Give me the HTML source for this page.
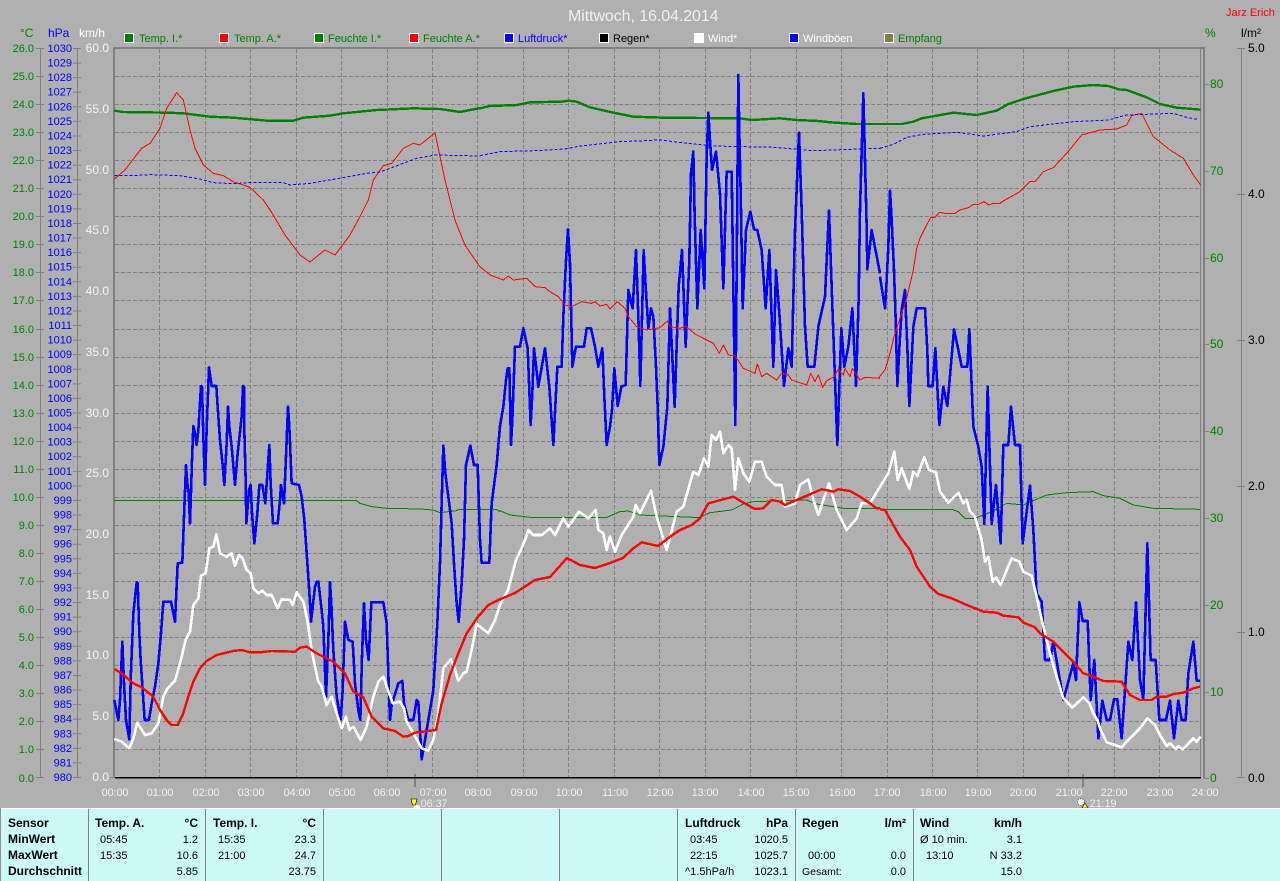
<!DOCTYPE html>
<html><head><meta charset="utf-8"><title>Mittwoch, 16.04.2014</title>
<style>
html,body{margin:0;padding:0;background:#b0b0b0;width:1280px;height:881px;overflow:hidden}
svg{display:block}
text{font-family:"Liberation Sans",Arial,sans-serif;font-size:11px}
.c{fill:#008000;text-anchor:end}
.h{fill:#0000ff;text-anchor:end}
.k{fill:#f4f4f4;text-anchor:end;font-size:12px}
.r{fill:#008000;font-size:12px}
.l{fill:#000;font-size:12px}
.t{fill:#f0f0f0;text-anchor:middle;font-size:11px;letter-spacing:-.15px}
.b{font-weight:bold;font-size:12px;fill:#000}
.n{fill:#000}
.e{text-anchor:end}
polyline{fill:none;stroke-linejoin:round;vector-effect:non-scaling-stroke;shape-rendering:crispEdges}
.bl{stroke:#0000ff;stroke-width:2.6}
.wh{stroke:#fff;stroke-width:2.6}
.rd{stroke:#ff0000;stroke-width:2.4}
.gr{stroke:#008000;stroke-width:2.4}
.rt{stroke:#ff0000;stroke-width:1}
.gt{stroke:#008000;stroke-width:1}
.dt{stroke:#0000ff;stroke-width:1;stroke-dasharray:3 2}
</style></head><body>
<svg width="1280" height="881" viewBox="0 0 1280 881" xmlns="http://www.w3.org/2000/svg">
<rect width="1280" height="881" fill="#b0b0b0"/>

<!-- grid -->
<path d="M115 76.5H1201M115 104.5H1201M115 132.5H1201M115 160.5H1201M115 188.5H1201M115 216.5H1201M115 244.5H1201M115 272.5H1201M115 300.5H1201M115 329.5H1201M115 357.5H1201M115 385.5H1201M115 413.5H1201M115 441.5H1201M115 469.5H1201M115 497.5H1201M115 525.5H1201M115 553.5H1201M115 581.5H1201M115 609.5H1201M115 637.5H1201M115 665.5H1201M115 693.5H1201M115 721.5H1201M115 749.5H1201" stroke="#808080" stroke-width="1" stroke-dasharray="4 2" fill="none" shape-rendering="crispEdges"/>
<path d="M159.5 49V777M205.5 49V777M250.5 49V777M296.5 49V777M341.5 49V777M387.5 49V777M432.5 49V777M477.5 49V777M523.5 49V777M568.5 49V777M614.5 49V777M659.5 49V777M705.5 49V777M750.5 49V777M796.5 49V777M841.5 49V777M887.5 49V777M932.5 49V777M977.5 49V777M1023.5 49V777M1068.5 49V777M1114.5 49V777M1159.5 49V777" stroke="#808080" stroke-width="1" stroke-dasharray="4 2" fill="none" shape-rendering="crispEdges"/>

<!-- frame -->
<g shape-rendering="crispEdges" fill="#808080">
<rect x="113" y="47" width="1092" height="2"/>
<rect x="113" y="47" width="2" height="731"/>
<rect x="1200" y="47" width="1" height="731"/>
<rect x="1203" y="47" width="2" height="731"/>
<rect x="40" y="48" width="1" height="729"/>
<rect x="77" y="48" width="1" height="729"/>
<rect x="1241" y="48" width="1" height="729"/>
<rect x="414" y="774" width="2" height="13"/>
<rect x="1082" y="774" width="2" height="13"/>
</g>
<!-- ticks -->
<path d="M36 48.5h8M36 76.5h8M36 104.5h8M36 132.5h8M36 160.5h8M36 188.5h8M36 216.5h8M36 244.5h8M36 272.5h8M36 300.5h8M36 329.5h8M36 357.5h8M36 385.5h8M36 413.5h8M36 441.5h8M36 469.5h8M36 497.5h8M36 525.5h8M36 553.5h8M36 581.5h8M36 609.5h8M36 637.5h8M36 665.5h8M36 693.5h8M36 721.5h8M36 749.5h8M36 777.5h8" stroke="#808080" fill="none" shape-rendering="crispEdges"/>
<line x1="77" y1="48" x2="77" y2="778" stroke="#808080" stroke-width="8" stroke-dasharray="1 13.58"/>
<path d="M110 777.5h4" stroke="#808080" fill="none" shape-rendering="crispEdges"/>
<path d="M1204 84.5h5M1204 171.5h5M1204 258.5h5M1204 344.5h5M1204 431.5h5M1204 518.5h5M1204 605.5h5M1204 692.5h5M1204 778.5h5M1237 48.5h8M1237 194.5h8M1237 340.5h8M1237 486.5h8M1237 632.5h8M1237 777.5h8" stroke="#808080" fill="none" shape-rendering="crispEdges"/>
<rect x="115" y="777" width="1086" height="1.6" fill="#000" shape-rendering="crispEdges"/>

<!-- thin green (Feuchte A.) -->
<g transform="translate(100 350) scale(.33333)"><polyline class="gt" points="43,452 770,452 780,460 815,470 860,475 960,477 1000,480 1020,488 1070,482 1075,478 1190,478 1200,485"/></g>
<g transform="translate(480 60) scale(.33333)"><polyline class="gt" points="60,1352 90,1365 150,1372 380,1372 420,1355 445,1353 480,1365 640,1372 660,1372 690,1358 755,1350 790,1332 820,1325 980,1320 1010,1332 1090,1345 1200,1345"/></g>
<g transform="translate(860 340) scale(.33333)"><polyline class="gt" points="60,508 275,508 295,515 315,535 345,535 395,515 440,490 490,495 525,480 560,465 620,458 700,455 730,467 780,475 820,495 880,505 1020,508"/></g>

<!-- thick green (Feuchte I.) -->
<g transform="scale(.33333)"><polyline class="gr" points="343,332 370,336 500,338 550,340 630,350 700,353 800,362 880,362 910,353 990,347 1030,340 1130,330 1240,325 1320,327 1380,336 1440,324"/></g>
<g transform="translate(480 60) scale(.33333)"><polyline class="gr" points="0,145 30,138 110,135 150,127 245,125 265,122 290,125 330,142 400,158 460,170 550,173 780,175 815,180 900,175 950,180 1015,183 1050,187 1130,192 1200,192"/></g>
<g transform="translate(860 0) scale(.33333)"><polyline class="gr" points="60,372 125,372 160,365 185,355 280,338 350,345 410,332 445,312 490,297 580,273 640,260 700,255 745,258 775,268 800,270 860,292 900,312 950,323 1022,329"/></g>

<!-- blue Windboeen -->
<g transform="translate(100 350) scale(.33333)"><polyline class="bl" points="43,1050 55,1110 60,1050 67,875 72,1000 78,1110 88,1168 92,990 100,790 110,697 113,700 118,850 122,930 130,1050 134,1110 147,1110 155,1060 165,1010 175,940 183,850 190,755 213,755 225,815 233,640 247,638 252,500 258,345 262,400 266,430 270,520 276,330 280,228 285,250 290,285 295,240 303,108 306,110 310,260 315,405 320,235 327,52 335,108 349,108 352,155 360,270 368,345 373,405 380,280 384,170 388,230 395,290 405,405 413,310 425,200 429,108 432,110 433,240 437,390 439,520 447,420 452,405 456,490 463,580 472,490 478,405 487,405 496,460 508,285 512,400 519,520 533,520 540,450 543,405 552,460 558,320 564,170 568,230 575,400 597,405 605,440 613,510 620,610 625,680 630,760 633,815 645,710 650,695 655,695 665,780 670,830 678,1040 685,870 690,697 694,760 700,900 710,1040 722,1110 728,1020 735,815 745,870 758,875 765,1000 775,1080 781,1110 786,920 792,760 798,870 806,930 814,757 850,757 860,820 866,1000 870,1110 875,1065 895,1000 907,993 912,1060 925,1110 940,1110 950,1050 955,1055 965,1228 975,1170 990,1080 1000,1020 1012,820 1020,640 1025,460 1030,287 1036,370 1045,440 1055,520 1062,640 1070,760 1076,815 1085,700 1092,570 1098,345 1111,287 1122,345 1133,345 1140,570 1145,638 1168,638 1175,460 1190,345 1200,228"/></g>
<g transform="translate(480 60) scale(.33333)"><polyline class="bl" points="60,1098 70,1040 78,960 83,925 88,925 93,1155 97,1080 105,860 120,860 130,805 143,865 146,940 152,1095 157,1000 162,865 175,980 195,865 208,980 220,1155 232,920 245,920 250,770 258,600 264,508 270,610 277,920 288,860 312,860 320,805 333,805 345,860 355,920 367,865 373,1010 380,1155 390,1100 396,1050 403,925 413,1038 424,980 437,975 445,690 458,745 468,570 475,770 481,978 491,570 497,680 505,805 513,745 520,770 528,920 533,1040 538,1215 550,1160 562,1040 570,745 584,1040 596,680 606,570 617,860 628,600 633,340 640,275 644,470 652,745 662,510 673,685 680,290 685,158 690,240 696,330 708,275 720,400 730,685 740,335 755,335 766,1095 775,45 778,220 782,395 788,745 798,510 811,455 822,508 832,510 845,570 857,745 868,570 880,920 888,630 898,760 912,978 925,865 935,920 945,510 957,218 965,450 975,800 983,920 1003,920 1015,800 1035,710 1047,452 1055,680 1072,1155 1084,805 1093,920 1105,860 1117,745 1128,978 1136,715 1140,450 1150,100 1160,500 1162,628 1175,510 1200,640"/></g>
<g transform="translate(870 170) scale(.33333)"><polyline class="bl" points="30,320 45,415 50,330 55,230 60,62 65,150 72,300 78,480 82,648 90,500 95,420 105,360 108,440 112,530 118,708 130,470 140,415 165,415 172,540 175,648 188,648 196,534 208,765 220,650 232,708 245,560 252,478 265,540 275,590 292,590 298,478 303,600"/></g>
<g transform="translate(860 340) scale(.33333)"><polyline class="bl" points="333,90 340,260 355,320 365,380 373,552 383,140 395,552 408,435 422,610 430,315 445,315 453,200 465,315 480,315 488,610 510,437 520,570 530,760 545,785 555,960 570,960 580,905 610,1080 640,970 648,1020 658,787 668,843 683,843 692,1080 703,960 715,1195 727,1082 740,1140 750,1140 762,1078 772,1078 785,1195 795,1050 805,905 817,960 828,787 840,1020 850,1078 862,610 872,960 887,960 898,1140 918,1140 930,1082 942,1195 955,1082 965,1140 977,1140 985,1000 1000,905 1010,1022 1020,1022"/></g>

<!-- thin red (Temp. I. curve) -->
<g transform="scale(.33333)"><polyline class="rt" points="343,537 375,510 400,477 425,445 450,430 480,385 500,325 530,278 550,300 570,390 585,445 610,495 640,520 670,527 700,545 750,562 790,600 816,639 855,705 900,765 930,786 975,750 1005,765 1050,705 1080,650 1105,600 1120,540 1150,497 1175,490 1210,445 1240,430 1260,435 1305,399 1335,540 1365,660 1395,735 1440,801"/></g>
<g transform="translate(480 60) scale(.33333)"><polyline class="rt" points="0,620 30,645 70,660 85,648 100,660 140,655 165,680 195,683 210,695 235,710 255,735 275,740 305,725 335,730 345,725 360,738 380,733 390,747 412,725 435,745 445,770 470,800 500,810 540,803 562,783 570,800 600,805 618,798 645,822 700,850 718,880 730,855 745,885 765,888 790,925 825,940 832,912 845,950 860,940 890,960 905,940 925,945 935,960 980,975 992,940 1005,965 1015,945 1028,982 1040,962 1062,950 1075,928 1090,945 1095,925 1110,950 1117,925 1140,960 1155,952 1200,955"/></g>
<g transform="translate(860 340) scale(.33333)"><polyline class="rt" points="55,115 75,90 90,40 100,0"/></g>
<g transform="translate(870 170) scale(.33333)"><polyline class="rt" points="69,510 85,460 110,385 130,300 140,235 150,205 170,165 182,143 195,142 208,127 225,130 255,130 270,120 295,113 310,103 325,103 342,95 357,105 370,100 390,100 405,90"/></g>
<g transform="translate(860 0) scale(.33333)"><polyline class="rt" points="435,600 480,575 510,545 525,545 550,515 580,503 620,460 665,405 720,390 770,387 800,375 815,347 845,340 880,410 930,450 970,475 1000,525 1022,555"/></g>

<!-- dotted blue (Luftdruck) -->
<g transform="scale(.33333)"><polyline class="dt" points="343,527 400,527 450,524 540,527 600,537 640,548 700,551 750,548 850,548 870,555 930,550 1000,538 1100,520 1140,516 1250,475 1305,465 1440,468"/></g>
<g transform="translate(480 60) scale(.33333)"><polyline class="dt" points="0,287 60,275 165,272 255,267 300,258 420,245 540,240 640,252 700,258 885,262 950,268 1000,272 1200,265"/></g>
<g transform="translate(860 0) scale(.33333)"><polyline class="dt" points="60,445 100,433 140,412 190,403 290,397 370,408 470,395 510,380 640,365 745,360 800,345 940,340 980,352 1012,358"/></g>

<!-- white wind -->
<g transform="translate(100 350) scale(.33333)"><polyline class="wh" points="43,1167 65,1175 88,1195 100,1165 112,1118 135,1155 155,1150 175,1120 190,1040 203,1015 225,992 240,940 257,870 270,845 280,765 295,745 303,677 317,670 328,595 340,590 349,553 360,610 380,620 395,610 405,647 417,615 428,625 440,660 452,670 460,715 475,730 487,722 500,735 515,735 533,775 545,748 570,750 578,765 590,727 610,755 622,810 635,900 645,950 655,995 665,1010 680,1065 695,1040 710,1090 725,1135 738,1100 748,1140 760,1130 782,1170 800,1130 810,1085 820,1040 835,995 850,980 862,1015 878,1060 900,1055 912,1075 920,1115 940,1150 965,1195 985,1202 1000,1170 1015,1090 1030,955 1052,928 1062,950 1075,993 1090,970 1100,965 1115,900 1130,822 1165,850 1185,810 1200,765 1224,720 1248,630"/></g>
<g transform="translate(480 60) scale(.33333)"><polyline class="wh" points="108,1500 120,1475 135,1440 145,1410 160,1425 185,1425 210,1405 225,1425 250,1375 265,1400 297,1355 325,1375 347,1350 355,1410 370,1420 380,1470 390,1430 405,1475 425,1425 460,1370 467,1335 480,1360 513,1292 530,1370 560,1470 590,1355 610,1340 640,1235 655,1245 672,1195 685,1220 695,1125 708,1140 720,1115 730,1180 745,1155 755,1165 765,1290 775,1195 790,1240 808,1265 825,1205 845,1205 860,1250 885,1275 905,1275 915,1340 945,1330 960,1275 985,1258 1000,1320 1015,1365 1047,1270 1070,1350 1100,1410 1130,1375 1145,1330 1170,1330 1200,1280"/></g>
<g transform="translate(860 340) scale(.33333)"><polyline class="wh" points="60,440 85,400 103,335 113,420 125,385 148,447 160,395 172,408 193,352 207,390 228,397 240,455 265,488 295,458 310,490 320,480 330,515 345,530 365,600 375,665 385,650 398,725 408,712 422,735 440,690 455,655 478,665 490,695 515,707 530,770 550,860 575,960 610,1075 637,1103 670,1072 688,1090 700,1120 712,1140 722,1170 740,1207 765,1215 785,1222 800,1205 840,1165 862,1135 885,1155 900,1185 920,1218 930,1210 948,1228 955,1218 968,1228 1000,1195 1010,1205 1022,1190"/></g>

<!-- thick red (Temp. A.) -->
<g transform="translate(100 350) scale(.33333)"><polyline class="rd" points="43,957 65,970 100,1000 125,1012 160,1040 180,1080 200,1110 215,1125 233,1125 248,1095 265,1040 280,995 300,955 320,933 350,915 400,903 425,900 450,907 480,907 515,903 585,905 600,893 620,890 650,910 680,925 700,935 735,970 760,1025 790,1042 815,1100 850,1135 885,1143 910,1160 925,1158 945,1148 1008,1140 1025,1060 1050,975 1075,910 1100,850 1130,805 1165,765 1195,750 1245,729 1305,690 1350,681 1401,624 1440,645 1485,654 1530,639 1569,624"/></g>
<g transform="translate(480 60) scale(.33333)"><polyline class="rd" points="429,1494 460,1465 485,1447 535,1458 570,1430 600,1410 635,1395 660,1375 685,1330 760,1310 785,1325 825,1347 850,1345 875,1320 900,1325 915,1335 950,1320 1025,1288 1060,1295 1075,1288 1110,1293 1140,1310 1170,1330 1190,1345 1200,1345"/></g>
<g transform="translate(860 340) scale(.33333)"><polyline class="rd" points="60,508 75,510 100,555 120,590 150,630 170,680 210,740 235,762 280,777 320,795 370,815 410,818 430,827 475,832 490,848 525,862 540,880 580,905 635,960 670,1000 700,1010 730,1023 785,1025 810,1065 840,1080 875,1080 890,1070 920,1070 940,1062 970,1058 1000,1045 1020,1040"/></g>

<!-- header -->
<text x="568" y="21" style="font-size:16px;letter-spacing:-.08px" fill="#f0f0f0">Mittwoch, 16.04.2014</text>
<text x="1226" y="16" fill="#ff0000">Jarz Erich</text>
<text x="20" y="37" style="font-size:12px" fill="#008000">°C</text>
<text x="48" y="37" style="font-size:12px" fill="#0000ff">hPa</text>
<text x="79" y="37" style="font-size:12px" fill="#fff">km/h</text>
<text x="1205" y="37" style="font-size:12px" fill="#008000">%</text>
<text x="1241" y="37" style="font-size:12px" fill="#000">l/m²</text>

<!-- legend -->
<g shape-rendering="crispEdges" stroke="#fff" stroke-width="1">
<rect x="124.5" y="33.5" width="9" height="9" fill="#008000"/>
<rect x="219.5" y="33.5" width="9" height="9" fill="#ff0000"/>
<rect x="314.5" y="33.5" width="9" height="9" fill="#008000"/>
<rect x="409.5" y="33.5" width="9" height="9" fill="#ff0000"/>
<rect x="504.5" y="33.5" width="9" height="9" fill="#0000ff"/>
<rect x="599.5" y="33.5" width="9" height="9" fill="#000"/>
<rect x="694.5" y="33.5" width="9" height="9" fill="#fff"/>
<rect x="789.5" y="33.5" width="9" height="9" fill="#0000ff"/>
<rect x="884.5" y="33.5" width="9" height="9" fill="#808040"/>
</g>
<text x="139" y="42" fill="#008000">Temp. I.*</text>
<text x="234" y="42" fill="#008000">Temp. A.*</text>
<text x="328" y="42" fill="#008000">Feuchte I.*</text>
<text x="423" y="42" fill="#008000">Feuchte A.*</text>
<text x="518" y="42" fill="#0000ff">Luftdruck*</text>
<text x="613" y="42" fill="#000">Regen*</text>
<text x="708" y="42" fill="#fff">Wind*</text>
<text x="803" y="42" fill="#fff">Windböen</text>
<text x="898" y="42" fill="#008000">Empfang</text>

<!-- C axis -->
<g transform="translate(0 4)">
<text class="c" x="34" y="48">26.0</text><text class="c" x="34" y="76">25.0</text><text class="c" x="34" y="104">24.0</text><text class="c" x="34" y="132">23.0</text><text class="c" x="34" y="160">22.0</text><text class="c" x="34" y="188">21.0</text><text class="c" x="34" y="216">20.0</text><text class="c" x="34" y="244">19.0</text><text class="c" x="34" y="272">18.0</text><text class="c" x="34" y="300">17.0</text><text class="c" x="34" y="329">16.0</text><text class="c" x="34" y="357">15.0</text><text class="c" x="34" y="385">14.0</text><text class="c" x="34" y="413">13.0</text><text class="c" x="34" y="441">12.0</text><text class="c" x="34" y="469">11.0</text><text class="c" x="34" y="497">10.0</text><text class="c" x="34" y="525">9.0</text><text class="c" x="34" y="553">8.0</text><text class="c" x="34" y="581">7.0</text><text class="c" x="34" y="609">6.0</text><text class="c" x="34" y="637">5.0</text><text class="c" x="34" y="665">4.0</text><text class="c" x="34" y="693">3.0</text><text class="c" x="34" y="721">2.0</text><text class="c" x="34" y="749">1.0</text><text class="c" x="34" y="778">0.0</text>
</g>
<!-- hPa axis -->
<g transform="translate(0 4)">
<text class="h" x="72" y="48">1030</text><text class="h" x="72" y="62.6">1029</text><text class="h" x="72" y="77.2">1028</text><text class="h" x="72" y="91.7">1027</text><text class="h" x="72" y="106.3">1026</text><text class="h" x="72" y="120.9">1025</text><text class="h" x="72" y="135.5">1024</text><text class="h" x="72" y="150.1">1023</text><text class="h" x="72" y="164.6">1022</text><text class="h" x="72" y="179.2">1021</text><text class="h" x="72" y="193.8">1020</text><text class="h" x="72" y="208.4">1019</text><text class="h" x="72" y="223">1018</text><text class="h" x="72" y="237.5">1017</text><text class="h" x="72" y="252.1">1016</text><text class="h" x="72" y="266.7">1015</text><text class="h" x="72" y="281.3">1014</text><text class="h" x="72" y="295.9">1013</text><text class="h" x="72" y="310.4">1012</text><text class="h" x="72" y="325">1011</text><text class="h" x="72" y="339.6">1010</text><text class="h" x="72" y="354.2">1009</text><text class="h" x="72" y="368.8">1008</text><text class="h" x="72" y="383.3">1007</text><text class="h" x="72" y="397.9">1006</text><text class="h" x="72" y="412.5">1005</text><text class="h" x="72" y="427.1">1004</text><text class="h" x="72" y="441.7">1003</text><text class="h" x="72" y="456.2">1002</text><text class="h" x="72" y="470.8">1001</text><text class="h" x="72" y="485.4">1000</text><text class="h" x="72" y="500">999</text><text class="h" x="72" y="514.6">998</text><text class="h" x="72" y="529.1">997</text><text class="h" x="72" y="543.7">996</text><text class="h" x="72" y="558.3">995</text><text class="h" x="72" y="572.9">994</text><text class="h" x="72" y="587.5">993</text><text class="h" x="72" y="602">992</text><text class="h" x="72" y="616.6">991</text><text class="h" x="72" y="631.2">990</text><text class="h" x="72" y="645.8">989</text><text class="h" x="72" y="660.4">988</text><text class="h" x="72" y="674.9">987</text><text class="h" x="72" y="689.5">986</text><text class="h" x="72" y="704.1">985</text><text class="h" x="72" y="718.7">984</text><text class="h" x="72" y="733.3">983</text><text class="h" x="72" y="747.8">982</text><text class="h" x="72" y="762.4">981</text><text class="h" x="72" y="777">980</text>
</g>
<!-- km/h axis -->
<g transform="translate(0 4)">
<text class="k" x="109" y="48">60.0</text><text class="k" x="109" y="109">55.0</text><text class="k" x="109" y="170">50.0</text><text class="k" x="109" y="230">45.0</text><text class="k" x="109" y="291">40.0</text><text class="k" x="109" y="352">35.0</text><text class="k" x="109" y="413">30.0</text><text class="k" x="109" y="473">25.0</text><text class="k" x="109" y="534">20.0</text><text class="k" x="109" y="595">15.0</text><text class="k" x="109" y="655">10.0</text><text class="k" x="109" y="716">5.0</text><text class="k" x="109" y="777">0.0</text>
</g>
<!-- % axis -->
<g transform="translate(0 4)">
<text class="r" x="1210" y="84">80</text><text class="r" x="1210" y="171">70</text><text class="r" x="1210" y="258">60</text><text class="r" x="1210" y="344">50</text><text class="r" x="1210" y="431">40</text><text class="r" x="1210" y="518">30</text><text class="r" x="1210" y="605">20</text><text class="r" x="1210" y="692">10</text><text class="r" x="1210" y="778">0</text>
</g>
<!-- l/m2 axis -->
<g transform="translate(0 4)">
<text class="l" x="1248" y="48">5.0</text><text class="l" x="1248" y="194">4.0</text><text class="l" x="1248" y="340">3.0</text><text class="l" x="1248" y="486">2.0</text><text class="l" x="1248" y="632">1.0</text><text class="l" x="1248" y="778">0.0</text>
</g>
<!-- time axis -->
<g>
<text class="t" x="115" y="796">00:00</text><text class="t" x="160" y="796">01:00</text><text class="t" x="206" y="796">02:00</text><text class="t" x="251" y="796">03:00</text><text class="t" x="297" y="796">04:00</text><text class="t" x="342" y="796">05:00</text><text class="t" x="387" y="796">06:00</text><text class="t" x="433" y="796">07:00</text><text class="t" x="478" y="796">08:00</text><text class="t" x="524" y="796">09:00</text><text class="t" x="569" y="796">10:00</text><text class="t" x="615" y="796">11:00</text><text class="t" x="660" y="796">12:00</text><text class="t" x="705" y="796">13:00</text><text class="t" x="751" y="796">14:00</text><text class="t" x="796" y="796">15:00</text><text class="t" x="842" y="796">16:00</text><text class="t" x="887" y="796">17:00</text><text class="t" x="933" y="796">18:00</text><text class="t" x="978" y="796">19:00</text><text class="t" x="1023" y="796">20:00</text><text class="t" x="1069" y="796">21:00</text><text class="t" x="1114" y="796">22:00</text><text class="t" x="1160" y="796">23:00</text><text class="t" x="1205" y="796">24:00</text>
<text class="t" x="434" y="807">06:37</text>
<text class="t" x="1103" y="807">21:19</text>
</g>
<!-- sunrise/sunset icons -->
<polygon points="411,799 417,799 416,803 415,805 413,805 412,803" fill="#ffff00" stroke="#000" stroke-width=".6"/>
<ellipse cx="417" cy="807" rx="3.5" ry="2" fill="#fff"/>
<circle cx="1081" cy="802" r="3.4" fill="#fff" stroke="#2030c0" stroke-width=".8" stroke-dasharray="1 1.5"/>
<polygon points="1085,803 1088,808 1082,808" fill="#ffff00" stroke="#000" stroke-width=".6"/>

<!-- bottom panel -->
<rect x="0" y="808" width="1280" height="73" fill="#ccfaf7" shape-rendering="crispEdges"/>
<rect x="0" y="808" width="1280" height="1" fill="#fff" shape-rendering="crispEdges"/>
<rect x="0" y="808" width="1" height="73" fill="#909090" shape-rendering="crispEdges"/>
<g fill="#808080" shape-rendering="crispEdges">
<rect x="88" y="809" width="1" height="72"/><rect x="205" y="809" width="1" height="72"/><rect x="323" y="809" width="1" height="72"/><rect x="441" y="809" width="1" height="72"/><rect x="559" y="809" width="1" height="72"/><rect x="677" y="809" width="1" height="72"/><rect x="795" y="809" width="1" height="72"/><rect x="913" y="809" width="1" height="72"/>
</g>
<g>
<text class="b" x="8" y="827">Sensor</text><text class="b" x="8" y="843">MinWert</text><text class="b" x="8" y="859">MaxWert</text><text class="b" x="8" y="875">Durchschnitt</text>

<text class="b" x="95" y="827">Temp. A.</text><text class="b e" x="198" y="827">°C</text>
<text class="n" x="100" y="843">05:45</text><text class="n e" x="198" y="843">1.2</text>
<text class="n" x="100" y="859">15:35</text><text class="n e" x="198" y="859">10.6</text>
<text class="n e" x="198" y="875">5.85</text>

<text class="b" x="213" y="827">Temp. I.</text><text class="b e" x="316" y="827">°C</text>
<text class="n" x="218" y="843">15:35</text><text class="n e" x="316" y="843">23.3</text>
<text class="n" x="218" y="859">21:00</text><text class="n e" x="316" y="859">24.7</text>
<text class="n e" x="316" y="875">23.75</text>

<text class="b" x="685" y="827">Luftdruck</text><text class="b e" x="788" y="827">hPa</text>
<text class="n" x="690" y="843">03:45</text><text class="n e" x="788" y="843">1020.5</text>
<text class="n" x="690" y="859">22:15</text><text class="n e" x="788" y="859">1025.7</text>
<text class="n" x="685" y="875">^1.5hPa/h</text><text class="n e" x="788" y="875">1023.1</text>

<text class="b" x="802" y="827">Regen</text><text class="b e" x="906" y="827">l/m²</text>
<text class="n" x="808" y="859">00:00</text><text class="n e" x="906" y="859">0.0</text>
<text class="n" x="802" y="875" style="font-size:10.5px">Gesamt:</text><text class="n e" x="906" y="875">0.0</text>

<text class="b" x="920" y="827">Wind</text><text class="b e" x="1022" y="827">km/h</text>
<text class="n" x="920" y="843">Ø 10 min.</text><text class="n e" x="1022" y="843">3.1</text>
<text class="n" x="926" y="859">13:10</text><text class="n e" x="1022" y="859">N 33.2</text>
<text class="n e" x="1022" y="875">15.0</text>
</g>
</svg>
</body></html>
